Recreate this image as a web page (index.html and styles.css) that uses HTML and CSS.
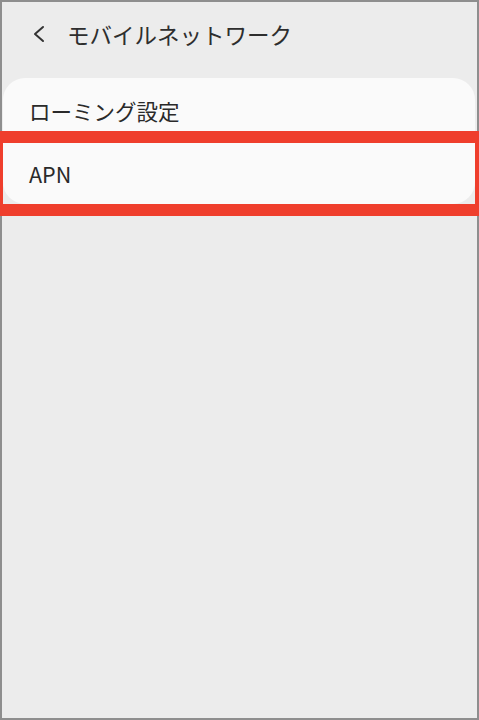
FILE: index.html
```html
<!DOCTYPE html>
<html lang="ja">
<head>
    <meta charset="UTF-8">
    <meta name="viewport" content="width=device-width, initial-scale=1.0">
    <title>モバイルネットワーク</title>
    <link rel="stylesheet" href="styles.css">
</head>
<body>
    <div class="screen">
        <div class="header">
            <svg class="back" width="13" height="18" viewBox="0 0 13 18">
                <polyline points="11,2 3,9 11,16" fill="none" stroke="#333" stroke-width="2" stroke-linecap="round" stroke-linejoin="round"/>
            </svg>
            <h1>モバイルネットワーク</h1>
        </div>

        <div class="card">
            <div class="row row-first">ローミング設定</div>
            <div class="row row-last highlight">APN</div>
        </div>
    </div>
</body>
</html>
```

FILE: styles.css
```css
body {
    margin: 0;
    background: #ececec;
    font-family: "Noto Sans CJK JP", "Noto Sans", sans-serif;
    color: #2a2a2a;
}
.screen {
    width: 479px;
    height: 720px;
    box-sizing: border-box;
    border: 2px solid #8e8e8e;
    background: #ececec;
}
.header {
    display: flex;
    align-items: center;
    height: 64px;
    padding-left: 30px;
}
.back {
    display: block;
    margin-right: 22px;
}
h1 {
    margin: 0;
    font-size: 22.5px;
    font-weight: 400;
    color: #2e2e2e;
}
.card {
    margin: 12px 2px 0 1px;
    background: #fafafa;
    border-radius: 22px;
}
.row {
    display: flex;
    align-items: center;
    padding-left: 26px;
    font-size: 21.5px;
}
.row-first {
    height: 65px;
}
.row-last {
    height: 61px;
}
.highlight {
    position: relative;
}
.highlight::after {
    content: "";
    position: absolute;
    top: -12px;
    right: -4px;
    bottom: -12px;
    left: -3px;
    border-style: solid;
    border-color: #ef3e2c;
    border-width: 12px 4px 12px 3px;
}
```
